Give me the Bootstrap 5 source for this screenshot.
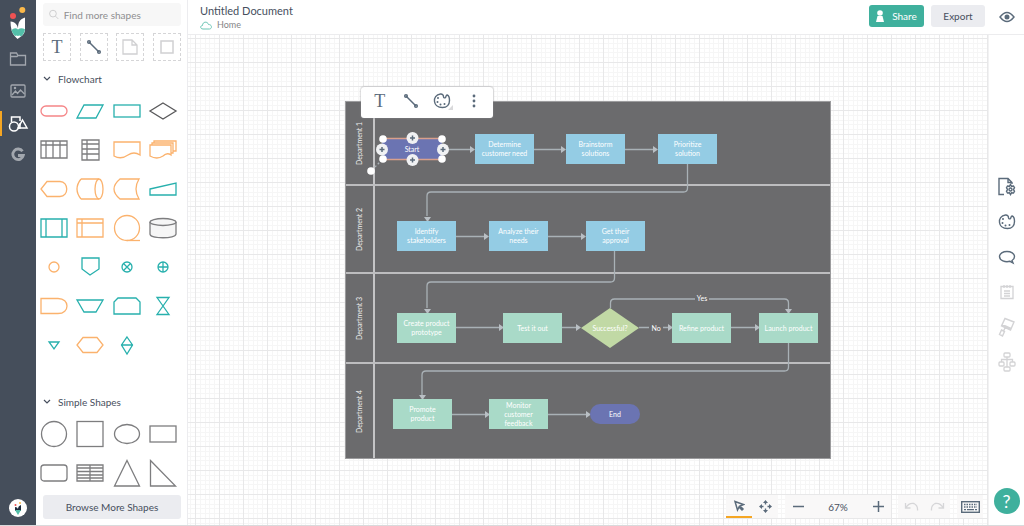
<!DOCTYPE html>
<html lang="en">
<head>
<meta charset="utf-8">
<meta name="viewport" content="width=device-width, initial-scale=1">
<title>Untitled Document</title>
<link href="https://cdn.jsdelivr.net/npm/bootstrap@5.3.0/dist/css/bootstrap.min.css" rel="stylesheet">
<style>
  :root { --slate:#5b6b7b; --ink:#474f5e; --teal:#3fb09d; --amber:#f5a623; --conn:#a9b1b6; }
  body { font-family: Lato, "Liberation Sans", sans-serif; font-size: 10px; line-height: 16px; color: var(--ink); background: #fff; }
  svg { display: block; fill: none; stroke: currentColor; }
  svg.solid { stroke: none; }
  button { color: inherit; }
  .plain-btn { border: 0; background: none; padding: 0; display: flex; align-items: center; justify-content: center; }
  .shell { border-bottom: 1px solid #d9dadc; }

  .side-nav { width: 36px; background: #454e5b; color: #a2a7ae; }
  .side-nav .plain-btn { width: 36px; height: 32px; }
  .side-nav .brand-link { height: 43px; padding-top: 3px; }
  .side-nav .current { color: #fff; border-left: 2px solid var(--amber); height: 25px; margin: 4px 0 3px; padding-right: 2px; }
  .side-nav .avatar { width: 18px; height: 18px; background: #fff; margin-bottom: 8px; }

  .shape-panel { width: 152px; border-right: 1px solid #ececef; }
  .inset { margin: 0 6px 0 7px; }
  .search-box { height: 23px; background: #f7f7f7; border-radius: 3px; margin-top: 3px; padding-left: 6px; gap: 5px; color: #c9c9cb; }
  .search-box input { border: 0; background: none; outline: 0; color: #8b8b8d; font-size: 10px; padding: 0; min-width: 0; }
  .search-box input::placeholder { color: #8e8e90; opacity: 1; }
  .quick-row { padding: 7px 0 6px; }
  .quick { width: 28px; height: 28px; border: 1px dashed #d5d5d7; color: #d0d0d2; }
  .section-head { height: 24px; gap: 7px; font-size: 10px; }
  .shape-grid { display: grid; grid-template-columns: repeat(4, 1fr); margin-right: 6px; }
  .shape-grid .plain-btn { height: 39px; }
  .shape-grid svg { stroke-width: 1.3; }
  .c-teal { color: #27b0ad; } .c-orange { color: #fbb26d; } .c-gray { color: #7d7d7f; } .c-red { color: #f58587; } .c-dark { color: #5a5a5c; }
  .dark-slate { color: var(--slate); }
  .browse-row { padding: 3px 0 6px; }
  .soft-btn { background: #ebecf0; color: var(--ink); font-size: 10px; line-height: 16px; border: 0; border-radius: 3px; }

  .top-bar { height: 35px; border-bottom: 1px solid #ececee; padding: 2px 9px 0 12px; }
  .doc-title { font-size: 11px; line-height: 17px; margin: 0; font-weight: 400; }
  .crumb { font-size: 9px; line-height: 12px; color: #858587; gap: 5px; text-decoration: none; }
  .top-bar .btn { font-size: 10px; line-height: 14px; height: 22px; padding: 0; border: 0; border-radius: 3px; margin: 3px 0 0 7px; }
  .btn-share { width: 55px; background: var(--teal) !important; color: #fff !important; gap: 8px; }
  .btn-export { width: 54px; background: #ebecf0 !important; color: var(--ink) !important; }
  .eye-btn { margin: 9px 0 0 14px; }

  .canvas-area { overflow: hidden; padding-top: 66px; }
  .grid-bg { position: absolute; inset: 0; width: 100%; height: 100%; stroke: none; }
  .tool-rail { width: 36px; border-left: 1px solid #f2f2f3; color: var(--slate); padding-top: 26px; }
  .tool-rail .plain-btn { width: 36px; height: 35px; }
  .tool-rail .plain-btn:disabled { color: #d3d3d5; }
  .tool-rail .help-btn { width: 26px; height: 26px; background: var(--teal); color: #fff; font-size: 18px; margin-bottom: 11px; }

  /* swimlane diagram: nodes are placed freely inside the pool */
  .pool { width: 486px; height: 358px; background: #6b6b6d; border: 1px solid #9c9c9e; font-size: 7px; line-height: 9px; color: #fff; }
  .lane { border-bottom: 2px solid #bdbdbf; }
  .lane.last-lane { border-bottom: 0; }
  .lane span { width: 29px; border-left: 2px solid #c4c4c6; writing-mode: vertical-rl; transform: rotate(180deg); text-align: center; display: flex; align-items: center; justify-content: center; color: #f0f0f0; }
  .wires { position: absolute; left: -1px; top: -1px; stroke: var(--conn); stroke-width: 1.3; }
  .wires .tip { fill: #b9bfc4; stroke: none; }
  .node { position: absolute; width: 59px; height: 30px; display: flex; align-items: center; justify-content: center; text-align: center; }
  .node, .cond { margin: -1px 0 0 -1px; }
  .n-blue { background: #94cce4; } .n-green { background: #a9dac8; } .n-violet { background: #6b74b2; }
  .n-lime { background: #c1d9a5; clip-path: polygon(50% 0, 100% 50%, 50% 100%, 0 50%); }
  .cond { position: absolute; background: #6b6b6d; width: 14px; text-align: center; }

  .float-bar { position: absolute; left: 15px; top: -15px; height: 31px; width: 132px; padding: 0 3px; background: #fff; border-radius: 3px; box-shadow: 0 0 2px #8a8a8c; color: var(--slate); }
  .float-bar .plain-btn { width: 32px; padding-bottom: 3px; }
  .serif-t { font-family: "Liberation Serif", serif; font-size: 18px; color: var(--slate); }

  .bottom-bar { position: absolute; right: 5px; bottom: 7px; gap: 7px; }
  .bottom-bar .tool-set { background: #f9f8f8; height: 23px; color: var(--slate); font-size: 10px; }
  .bottom-bar .plain-btn { width: 26px; height: 23px; }
  .bottom-bar .chosen { border-bottom: 2px solid var(--amber); }
  .bottom-bar output { width: 54px; text-align: center; color: var(--ink); }
  .bottom-bar .history { color: #d6d6d8; }
</style>
</head>
<body>
<div class="shell d-flex vh-100 overflow-hidden">

  <nav class="side-nav d-flex flex-column flex-shrink-0 align-items-center" aria-label="Main">
    <button class="plain-btn brand-link" aria-label="Creately">
      <svg class="solid" width="20" height="34" viewBox="0 0 20 34">
        <circle cx="14.300" cy="4" r="3" fill="#fbb94a"/><circle cx="5" cy="10" r="3" fill="#ee5253"/>
        <path d="M2.500 15.500c5 .5 7 3.500 7.500 7C10 16 12 13 17 11.500V24q-.5 4-4 6.500L9.500 33 7 30.500Q2.500 26 2.500 15.500z" fill="#fff"/>
        <path d="M3.500 24q3.500-3 6.500-.5 3-2.500 7-.3-.5 4.500-4 7.300-1.500-1.500-3-.5-1.500-1-3 0-3-3-3.500-6z" fill="#54bfa9"/>
      </svg>
    </button>
    <button class="plain-btn" aria-label="Folders"><svg width="18" height="16" viewBox="0 0 18 16" stroke-width="1.3"><path d="M1.500 14V2h6l1.500 2.500h7.500V14zM1.500 5.500H8l1-1"/></svg></button>
    <button class="plain-btn" aria-label="Images"><svg width="18" height="16" viewBox="0 0 18 16" stroke-width="1.3"><rect x="2" y="2" width="14" height="12" rx="1"/><path d="M3 12l3.500-4 2 2.500 3-3.500 4 4"/><circle cx="6" cy="5" r=".6"/></svg></button>
    <button class="plain-btn current" aria-label="Shapes"><svg width="22" height="18" viewBox="0 0 22 18" stroke-width="1.5"><path d="M4.500 7V2H13v4M13 8v5h-2"/><circle cx="7" cy="11.500" r="4.500"/><path d="M15.500 5l4.500 8h-9z"/></svg></button>
    <button class="plain-btn" aria-label="Google"><svg width="16" height="16" viewBox="0 0 16 16" stroke-width="2.800"><path d="M12.500 4.300A5.300 5.300 0 1 0 13.300 8.500H8"/></svg></button>
    <button class="plain-btn avatar rounded-circle mt-auto" aria-label="Account">
      <svg class="solid" width="10" height="14" viewBox="0 0 10 14"><circle cx="7" cy="2" r="1" fill="#fbb94a"/><circle cx="2.500" cy="4" r="1" fill="#ee5253"/><path d="M2 6q2.500 0 3 2 0-3 3-4v6H2z" fill="#1d2b3d"/><path d="M2 9h6l-3 5z" fill="#54bfa9"/></svg>
    </button>
  </nav>

  <aside class="shape-panel d-flex flex-column flex-shrink-0">
    <label class="search-box inset d-flex align-items-center" style="margin-top:3px">
      <svg width="11" height="11" viewBox="0 0 11 11"><circle cx="4.500" cy="4.500" r="3.800"/><path d="M7.500 7.500l3 3"/></svg>
      <input type="search" placeholder="Find more shapes" aria-label="Find more shapes">
    </label>
    <div class="quick-row inset d-flex justify-content-between">
      <button class="plain-btn quick serif-t" aria-label="Text">T</button>
      <button class="plain-btn quick dark-slate" aria-label="Line"><svg width="16" height="16" viewBox="0 0 16 16" stroke-width="1.500"><path d="M3 3l10 10"/><circle cx="3" cy="3" r="1.300"/><circle cx="13" cy="13" r="1.300"/></svg></button>
      <button class="plain-btn quick" aria-label="Note"><svg width="16" height="16" viewBox="0 0 16 16" stroke-width="1.300"><path d="M1 1h9l5 5v9H1zM10 1v5h5"/></svg></button>
      <button class="plain-btn quick" aria-label="Frame"><svg width="14" height="14" viewBox="0 0 14 14" stroke-width="1.500"><rect x="1" y="1" width="12" height="12"/></svg></button>
    </div>

    <section>
      <button class="plain-btn section-head inset" aria-expanded="true"><svg width="8" height="6" viewBox="0 0 8 6" stroke-width="1.200"><path d="M1 1l3 3 3-3"/></svg>Flowchart</button>
      <div class="shape-grid">
        <button class="plain-btn c-red" aria-label="Terminator"><svg width="30" height="30"><rect x="2" y="10" width="26" height="10" rx="5"/></svg></button>
        <button class="plain-btn c-teal" aria-label="Data"><svg width="30" height="30"><path d="M9 9h19l-7 13H2z"/></svg></button>
        <button class="plain-btn c-teal" aria-label="Process"><svg width="30" height="30"><rect x="2" y="9" width="26" height="12"/></svg></button>
        <button class="plain-btn c-dark" aria-label="Decision"><svg width="30" height="30"><path d="M15 7l13 8-13 8-13-8z"/></svg></button>

        <button class="plain-btn c-gray" aria-label="Columns"><svg width="30" height="30"><path d="M2 6h26v17H2zM2 10h26M7 6v17M14 6v17M21 6v17"/></svg></button>
        <button class="plain-btn c-gray" aria-label="Rows"><svg width="30" height="30"><path d="M7 5h17v20H7zM12 5v20M7 9h17M7 14h17M7 19h17"/></svg></button>
        <button class="plain-btn c-orange" aria-label="Document"><svg width="30" height="30"><path d="M2 7h26v13q-6-4-12 0-7 5-14 1z"/></svg></button>
        <button class="plain-btn c-orange" aria-label="Documents"><svg width="30" height="30"><path d="M2 10h21v10q-4-3-8 1-6 4-13 0zM4 10V8h21v10h-2M6 8V6h22v10h-3"/></svg></button>

        <button class="plain-btn c-orange" aria-label="Display"><svg width="30" height="30"><path d="M8 7.500h13c9 0 9 15 0 15H8L2 15z"/></svg></button>
        <button class="plain-btn c-orange" aria-label="Direct data"><svg width="30" height="30"><path d="M6 5h18M6 25h18M6 5q-8 10 0 20"/><ellipse cx="24" cy="15" rx="4" ry="10"/></svg></button>
        <button class="plain-btn c-orange" aria-label="Stored data"><svg width="30" height="30"><path d="M8 5h19q-6 10 0 20H8q-12-10 0-20z"/></svg></button>
        <button class="plain-btn c-teal" aria-label="Manual input"><svg width="30" height="30"><path d="M2 15l26-6v12H2z"/></svg></button>

        <button class="plain-btn c-teal" aria-label="Predefined process"><svg width="30" height="30"><path d="M2 6h26v18H2zM7 6v18M23 6v18"/></svg></button>
        <button class="plain-btn c-orange" aria-label="Internal storage"><svg width="30" height="30"><path d="M2 6h26v18H2zM7 6v18M2 10h26"/></svg></button>
        <button class="plain-btn c-orange" aria-label="Sequential data"><svg width="30" height="30"><circle cx="15" cy="15" r="12.500"/><path d="M15 27.500h13"/></svg></button>
        <button class="plain-btn c-gray" aria-label="Database"><svg width="30" height="30"><path fill="#f6f6f6" d="M2 9v12c0 5 26 5 26 0V9"/><ellipse fill="#f6f6f6" cx="15" cy="9" rx="13" ry="3.500"/></svg></button>

        <button class="plain-btn c-orange" aria-label="Connector"><svg width="30" height="30"><circle cx="15" cy="15" r="5"/></svg></button>
        <button class="plain-btn c-teal" aria-label="Off-page link"><svg width="30" height="30"><path d="M7 6h17v11l-9 6-8-6z"/></svg></button>
        <button class="plain-btn c-teal" aria-label="Summing junction"><svg width="30" height="30"><circle cx="15" cy="15" r="5"/><path d="M11.500 11.500l7 7M18.500 11.500l-7 7"/></svg></button>
        <button class="plain-btn c-teal" aria-label="Or"><svg width="30" height="30"><circle cx="15" cy="15" r="5"/><path d="M15 10v10M10 15h10"/></svg></button>

        <button class="plain-btn c-orange" aria-label="Delay"><svg width="30" height="30"><path d="M2 7.500h17c12 0 12 15 0 15H2z"/></svg></button>
        <button class="plain-btn c-teal" aria-label="Manual operation"><svg width="30" height="30"><path d="M2 9h26l-7 12H9z"/></svg></button>
        <button class="plain-btn c-teal" aria-label="Loop limit"><svg width="30" height="30"><path d="M2 23V11l4-4h18l4 4v12z"/></svg></button>
        <button class="plain-btn c-teal" aria-label="Collate"><svg width="30" height="30"><path d="M9 6.500h12L9 23.500h12z"/></svg></button>

        <button class="plain-btn c-teal" aria-label="Merge"><svg width="30" height="30"><path d="M10 12h10l-5 7z"/></svg></button>
        <button class="plain-btn c-orange" aria-label="Preparation"><svg width="30" height="30"><path d="M8 7.500h14l6 7.500-6 7.500H8L2 15z"/></svg></button>
        <button class="plain-btn c-teal" aria-label="Sort"><svg width="30" height="30"><path d="M15 7l5.500 8-5.500 9-5.500-9zM9 15h12"/></svg></button>
      </div>
    </section>

    <section class="mt-auto">
      <button class="plain-btn section-head inset" aria-expanded="true"><svg width="8" height="6" viewBox="0 0 8 6" stroke-width="1.200"><path d="M1 1l3 3 3-3"/></svg>Simple Shapes</button>
      <div class="shape-grid">
        <button class="plain-btn c-gray" aria-label="Circle"><svg width="30" height="30"><circle cx="15" cy="15" r="12.500"/></svg></button>
        <button class="plain-btn c-gray" aria-label="Square"><svg width="30" height="30"><rect x="2" y="2.500" width="26" height="25"/></svg></button>
        <button class="plain-btn c-gray" aria-label="Ellipse"><svg width="30" height="30"><ellipse cx="15" cy="15" rx="12.500" ry="9.500"/></svg></button>
        <button class="plain-btn c-gray" aria-label="Rectangle"><svg width="30" height="30"><rect x="2" y="7" width="26" height="16"/></svg></button>
        <button class="plain-btn c-gray" aria-label="Rounded rectangle"><svg width="30" height="30"><rect x="2" y="7" width="26" height="16" rx="3"/></svg></button>
        <button class="plain-btn c-gray" aria-label="Table"><svg width="30" height="30"><path d="M2 7h26v16H2zM15 7v16M2 10h26M2 13.500h26M2 17h26M2 20h26"/></svg></button>
        <button class="plain-btn c-gray" aria-label="Triangle"><svg width="30" height="30"><path d="M15 2.500L27.500 28h-25z"/></svg></button>
        <button class="plain-btn c-gray" aria-label="Right triangle"><svg width="30" height="30"><path d="M2.500 2.500L27.500 28h-25z"/></svg></button>
      </div>
      <div class="browse-row inset d-grid"><button class="soft-btn py-1">Browse More Shapes</button></div>
    </section>
  </aside>

  <div class="d-flex flex-column flex-grow-1">
    <header class="top-bar d-flex align-items-start flex-shrink-0">
      <div class="me-auto">
        <h1 class="doc-title">Untitled Document</h1>
        <a href="#" class="crumb d-flex align-items-center"><svg width="12" height="9" viewBox="0 0 12 9"><path stroke="#6cc5b4" d="M3 8C0 8 0 4.500 2.500 4.500 2.500.500 7.500 0 8.500 3.500 12.500 3.500 12 8 9.500 8z"/></svg>Home</a>
      </div>
      <button class="btn btn-share d-flex align-items-center justify-content-center"><svg class="solid" width="8" height="12" viewBox="0 0 8 12"><circle cx="4" cy="3" r="2.800" fill="#fff"/><path fill="#fff" d="M1.500 6h5L8 12H0z"/></svg>Share</button>
      <button class="btn btn-export">Export</button>
      <button class="plain-btn dark-slate eye-btn" aria-label="Preview"><svg width="16" height="12" viewBox="0 0 16 12" stroke-width="1.400"><path d="M1 6q7-9 14 0-7 9-14 0z"/><circle cx="8" cy="6" r="1.800" fill="#5b6b7b"/></svg></button>
    </header>

    <div class="d-flex flex-grow-1 overflow-hidden">
      <main class="canvas-area position-relative flex-grow-1 d-flex justify-content-center align-items-start">
        <svg class="grid-bg" aria-hidden="true">
          <defs><pattern id="paper" x="7" y="3" width="24" height="24" patternUnits="userSpaceOnUse">
            <path fill="#f6f6f6" d="M5 0h1v24H5zM10 0h1v24h-1zM14 0h1v24h-1zM19 0h1v24h-1zM0 5h24v1H0zM0 10h24v1H0zM0 14h24v1H0zM0 19h24v1H0z"/>
            <path fill="#e8e8e9" d="M0 0h1v24H0zM0 0h24v1H0z"/></pattern></defs>
          <rect width="100%" height="100%" fill="url(#paper)"/>
        </svg>

        <div class="pool position-relative flex-shrink-0 d-flex flex-column">
          <div class="lane d-flex" style="height:84px"><span>Department 1</span></div>
          <div class="lane d-flex" style="height:88px"><span>Department 2</span></div>
          <div class="lane d-flex" style="height:90px"><span>Department 3</span></div>
          <div class="lane last-lane d-flex flex-grow-1"><span>Department 4</span></div>

          <svg class="wires" width="486" height="358" viewBox="345 101 486 358">
            <path d="M448 149.500h24M533 149.500h28M625 149.500h28M687.500 164v24q0 4-4 4H431q-4 0-4 4v20M456 236.500h29M548 236.500h33M614.500 251v27q0 4-4 4H431q-4 0-4 4v22M456 327.500h43M562 327.500h15M639 327.500h30M731 327.500h24M610.500 308v-5q0-4 4-4h170q4 0 4 4v6M788.500 343v24q0 4-4 4H426q-4 0-4 4v20M451 414.500h34M548 414.500h39"/>
            <path class="tip" d="M470 146l5 3.500-5 3.500zM561 146l5 3.500-5 3.500zM653 146l5 3.500-5 3.500zM484 233l5 3.500-5 3.500zM581 233l5 3.500-5 3.500zM499 324l5 3.500-5 3.500zM576 324l5 3.500-5 3.500zM668 324l5 3.500-5 3.500zM755 324l5 3.500-5 3.500zM485 411l5 3.500-5 3.500zM586 411l5 3.500-5 3.500zM424 217h7l-3.500 5zM424 309h7l-3.500 5zM785 309h7l-3.500 5zM419 395h7l-3.500 5z"/>
            <path d="M382 160l-11 11" stroke-dasharray="2 2"/>
          </svg>

          <div class="node n-violet" style="left:37px;top:38px;width:60px;height:20px">Start</div>
          <div class="node n-blue" style="left:130px;top:33px">Determine<br>customer need</div>
          <div class="node n-blue" style="left:221px;top:33px">Brainstorm<br>solutions</div>
          <div class="node n-blue" style="left:313px;top:33px">Prioritize<br>solution</div>
          <div class="node n-blue" style="left:52px;top:120px">Identify<br>stakeholders</div>
          <div class="node n-blue" style="left:144px;top:120px">Analyze their<br>needs</div>
          <div class="node n-blue" style="left:241px;top:120px">Get their<br>approval</div>
          <div class="node n-green" style="left:52px;top:212px">Create product<br>prototype</div>
          <div class="node n-green" style="left:158px;top:212px">Test it out</div>
          <div class="node n-lime" style="left:236px;top:207px;width:58px;height:40px">Successful?</div>
          <div class="node n-green" style="left:327px;top:212px">Refine product</div>
          <div class="node n-green" style="left:414px;top:212px">Launch product</div>
          <div class="node n-green" style="left:48px;top:298px">Promote<br>product</div>
          <div class="node n-green" style="left:144px;top:298px">Monitor<br>customer<br>feedback</div>
          <div class="node n-violet rounded-pill" style="left:245px;top:303px;width:50px;height:20px">End</div>
          <div class="cond" style="left:350px;top:193px">Yes</div>
          <div class="cond" style="left:304px;top:223px">No</div>

          <svg class="wires" width="120" height="90" viewBox="345 101 120 90" aria-hidden="true">
            <path d="M382 138.500h60M382 159.500h60" stroke="#d9a08c"/>
            <g fill="#fff" stroke="none"><circle cx="383" cy="139" r="3.800"/><circle cx="442" cy="139" r="3.800"/><circle cx="383" cy="159" r="3.800"/><circle cx="442" cy="159" r="3.800"/><circle cx="371" cy="171" r="3.800"/></g>
            <g fill="#f0f1f3" stroke="none"><circle cx="412.500" cy="138" r="6"/><circle cx="412.500" cy="160" r="6"/><circle cx="382" cy="149.500" r="6"/><circle cx="443" cy="149.500" r="6"/></g>
            <path stroke="#5b6b7b" stroke-width="1.500" d="M410 138h5M412.500 135.500v5M410 160h5M412.500 157.500v5M379.500 149.500h5M382 147v5M440.500 149.500h5M443 147v5"/>
          </svg>

          <div class="float-bar d-flex" role="toolbar" aria-label="Shape options">
            <button class="plain-btn serif-t" aria-label="Text">T</button>
            <button class="plain-btn" aria-label="Connector"><svg width="16" height="16" viewBox="0 0 16 16" stroke-width="1.500"><path d="M3 3l10 10"/><circle cx="3" cy="3" r="1.300"/><circle cx="13" cy="13" r="1.300"/></svg></button>
            <button class="plain-btn" aria-label="Style"><svg width="20" height="18" viewBox="0 0 20 18" stroke-width="1.400"><path d="M7.500 2C3 2.500 1 6 1.500 9.500c.5 4 4 6 8 6 4.500 0 7-3 7-7 0-3-.8-5-2.300-5.500-1.200-.3-1 1.500-1.700 2.500-.8.800-2 .3-2-.8C10.500 3 9.500 1.800 7.500 2z"/><path d="M5 6v.1M4.500 10v.1M7.500 12.500v.1M11.500 12v.1" stroke-width="2" stroke-linecap="round"/><path d="M20 13v5h-5z" fill="#d9d9db" stroke="none"/></svg></button>
            <button class="plain-btn" aria-label="More"><svg class="solid" width="4" height="16" viewBox="0 0 4 16"><g fill="#5b6b7b"><circle cx="2" cy="3" r="1.400"/><circle cx="2" cy="8" r="1.400"/><circle cx="2" cy="13" r="1.400"/></g></svg></button>
          </div>
        </div>

        <div class="bottom-bar d-flex" role="toolbar" aria-label="View">
          <div class="tool-set d-flex">
            <button class="plain-btn chosen" aria-label="Select"><svg width="12" height="12" viewBox="0 0 12 12" stroke-width="1.500"><path d="M2 1.500l8.500 3-3.500 1.500 3 3-1 1-3-3L4.500 10z"/></svg></button>
            <button class="plain-btn" aria-label="Pan"><svg class="solid" width="13" height="13" viewBox="0 0 13 13"><path fill="#5b6b7b" d="M6.500 0L9 3H7.200v1.500H5.800V3H4zM6.500 13L4 10h1.800V8.500h1.400V10H9zM0 6.500L3 4v1.800h1.500v1.400H3V9zM13 6.500L10 9V7.200H8.500V5.800H10V4z"/></svg></button>
          </div>
          <div class="tool-set d-flex align-items-center">
            <button class="plain-btn" aria-label="Zoom out"><svg width="11" height="11" stroke-width="1.500"><path d="M0 5.500h11"/></svg></button>
            <output>67%</output>
            <button class="plain-btn" aria-label="Zoom in"><svg width="11" height="11" stroke-width="1.500"><path d="M0 5.500h11M5.500 0v11"/></svg></button>
          </div>
          <div class="tool-set history d-flex" style="color:#d6d6d8">
            <button class="plain-btn" aria-label="Undo"><svg width="15" height="12" viewBox="0 0 15 12" stroke-width="1.300"><path d="M1.500 2v5h5M2 6.500q3-5 8-4 4 2 3.500 7"/></svg></button>
            <button class="plain-btn" aria-label="Redo"><svg width="15" height="12" viewBox="0 0 15 12" stroke-width="1.300"><path d="M13.500 2v5h-5M13 6.500q-3-5-8-4-4 2-3.500 7"/></svg></button>
          </div>
          <div class="tool-set d-flex">
            <button class="plain-btn" aria-label="Keyboard shortcuts"><svg width="19" height="12" viewBox="0 0 19 12"><rect x=".7" y=".7" width="17.600" height="10.600" stroke-width="1.400"/><path d="M3 3.500h13M3 6h13" stroke-width="1.500" stroke-dasharray="1.500 1"/><path d="M3 8.700h2M6 8.700h7M14 8.700h2" stroke-width="1.300"/></svg></button>
          </div>
        </div>
      </main>

      <aside class="tool-rail d-flex flex-column align-items-center flex-shrink-0" aria-label="Panels">
        <div class="mt-auto"></div>
        <button class="plain-btn" aria-label="Document settings"><svg width="20" height="20" viewBox="0 0 20 20" stroke-width="1.400"><path d="M7 17.500H2v-16h9l4 4V7M11 1.500v4h4"/><path d="M13.500 7.500l1 1.700 2-.2 1 1.700-1 1.800 1 1.800-1 1.700-2-.2-1 1.700-1-1.700-2 .2-1-1.700 1-1.800-1-1.800 1-1.700 2 .2z"/><circle cx="13.500" cy="12.500" r="1.500"/></svg></button>
        <button class="plain-btn" aria-label="Style"><svg width="18" height="18" viewBox="0 0 18 18" stroke-width="1.400"><path d="M7.500 2C3 2.500 1 6 1.500 9.500c.5 4 4 6 8 6 4.500 0 7-3 7-7 0-3-.8-5-2.300-5.500-1.200-.3-1 1.500-1.700 2.500-.8.800-2 .3-2-.8C10.500 3 9.500 1.800 7.500 2z"/><path d="M5 6v.1M4.500 10v.1M7.500 12.500v.1M11.500 12v.1" stroke-width="2" stroke-linecap="round"/></svg></button>
        <button class="plain-btn" aria-label="Comments"><svg width="18" height="16" viewBox="0 0 18 16" stroke-width="1.400"><path d="M12 12.300C7 13.500 1.500 11.500 1.500 7.500c0-3 3.500-5 7.500-5s7.500 2 7.500 5c0 2-1 3.200-2.500 4l1 2.500z"/></svg></button>
        <button class="plain-btn" disabled aria-label="Notes"><svg width="14" height="16" viewBox="0 0 14 16" stroke-width="1.300"><path d="M1 2.500h12v12H1zM4 1v3M7 1v3M10 1v3M4 7h6M4 9.500h6M4 12h6"/></svg></button>
        <button class="plain-btn" disabled aria-label="Format painter"><svg width="18" height="22" viewBox="0 0 18 22" stroke-width="1.400"><path d="M7 2.500l9 3.500-3.500 8-9-4zM4 8.500l9 4M7 12l-1.500 3-2-1-2 4.500 3 1.500 2-4.500-1-.5"/></svg></button>
        <button class="plain-btn" disabled aria-label="Structure"><svg width="18" height="20" viewBox="0 0 18 20" stroke-width="1.300"><rect x="6" y="1" width="6" height="4" rx="1"/><rect x="1" y="10" width="5" height="4" rx="1"/><rect x="12" y="10" width="5" height="4" rx="1"/><rect x="6" y="15" width="6" height="4" rx="1"/><path d="M9 5v10M3.500 10V7.500h11V10"/></svg></button>
        <button class="plain-btn help-btn rounded-circle mt-auto" aria-label="Help">?</button>
      </aside>
    </div>
  </div>
</div>
<script src="https://cdn.jsdelivr.net/npm/bootstrap@5.3.0/dist/js/bootstrap.bundle.min.js"></script>
</body>
</html>
